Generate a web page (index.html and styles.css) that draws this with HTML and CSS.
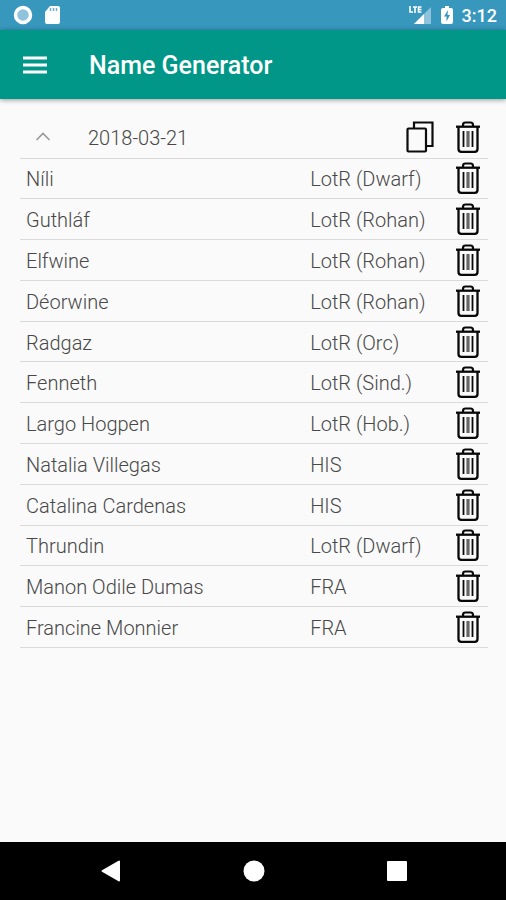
FILE: index.html
```html
<!DOCTYPE html>
<html lang="en">
<head>
<meta charset="utf-8">
<meta name="viewport" content="width=device-width, initial-scale=1">
<title>Name Generator</title>
<link rel="stylesheet" href="styles.css">
</head>
<body>
<svg class="sprite" aria-hidden="true">
  <symbol id="trash" viewBox="0 0 24 32">
    <g fill="none" stroke="#080808" stroke-width="2">
      <path d="M7 5V4q0-2.500 2.500-2.500h5q2.500 0 2.500 2.500v1" stroke-width="2.200"/>
      <path d="M0 5.700h24" stroke-width="2.300"/>
      <path d="M2.500 6v22q0 2.800 2.800 2.800h13.400q2.800 0 2.800-2.800V6" stroke-width="2.300"/>
      <path d="M7.500 10v16M16.500 10v16" stroke-width="1.800"/>
      <path d="M12 10v16" stroke="#666" stroke-width="3.200"/>
    </g>
  </symbol>
</svg>

<header class="status">
  <div class="status-group">
    <svg width="20" height="20" viewBox="0 0 20 20"><circle cx="10" cy="10" r="7.500" fill="#8fc3dc" stroke="#fff" stroke-width="3.500"/></svg>
    <svg width="16" height="20" viewBox="0 0 16 20"><path d="M6 1h8q2 0 2 2v14q0 2-2 2H3q-2 0-2-2V7z" fill="#fff"/><path d="M6.500 3v3M9.500 3v3M12.500 3v3" stroke="#6faecb" stroke-width="1.500"/></svg>
  </div>
  <div class="status-group status-right">
    <svg width="23" height="20" viewBox="0 0 23 20"><path d="M22 2v17H5z" fill="#8fc3dc"/><path d="M15 9v10H5z" fill="#fff"/><path d="M1 1v6h3M4 2h4M6 2v6M12.500 2H9.500v5h3M9.500 4.500h3" fill="none" stroke="#fff" stroke-width="1.600"/></svg>
    <svg class="battery" width="12" height="20" viewBox="0 0 12 20"><path d="M4 1h4v2h2q2 0 2 2v12q0 2-2 2H2q-2 0-2-2V5q0-2 2-2h2z" fill="#fff"/><path d="M7 5L3 11.500h2.500V16.500L9 10H6.500z" fill="#3797bc"/></svg>
    <time>3:12</time>
  </div>
</header>

<nav class="appbar">
  <button class="icon-btn" type="button" aria-label="Menu"><svg width="24" height="18" viewBox="0 0 24 18"><path d="M0 2h24M0 9h24M0 16h24" stroke="#fff" stroke-width="3"/></svg></button>
  <h1>Name Generator</h1>
</nav>

<main>
  <table>
    <thead>
      <tr>
        <th><div class="group"><button class="icon-btn" type="button" aria-label="Collapse"><svg width="16" height="10" viewBox="0 0 16 10"><path d="M1.500 8L8 1.500 14.500 8" fill="none" stroke="#999" stroke-width="1.600"/></svg></button><span>2018-03-21</span></div></th>
        <td colspan="2"><div class="actions"><button class="icon-btn" type="button" aria-label="Copy list"><svg width="28" height="32" viewBox="0 0 28 32"><path d="M8 7V1.500h18.500V25H21" fill="none" stroke="#0c0c0c" stroke-width="2.200"/><rect x="1.500" y="7.500" width="18.500" height="23" rx="1" fill="none" stroke="#0c0c0c" stroke-width="2.200"/></svg></button><button class="icon-btn" type="button" aria-label="Delete list"><svg width="24" height="32"><use href="#trash"/></svg></button></div></td>
      </tr>
    </thead>
    <tbody>
      <tr><td>Níli</td><td>LotR (Dwarf)</td><td><button class="icon-btn" type="button" aria-label="Delete Níli"><svg width="24" height="32"><use href="#trash"/></svg></button></td></tr>
      <tr><td>Guthláf</td><td>LotR (Rohan)</td><td><button class="icon-btn" type="button" aria-label="Delete Guthláf"><svg width="24" height="32"><use href="#trash"/></svg></button></td></tr>
      <tr><td>Elfwine</td><td>LotR (Rohan)</td><td><button class="icon-btn" type="button" aria-label="Delete Elfwine"><svg width="24" height="32"><use href="#trash"/></svg></button></td></tr>
      <tr><td>Déorwine</td><td>LotR (Rohan)</td><td><button class="icon-btn" type="button" aria-label="Delete Déorwine"><svg width="24" height="32"><use href="#trash"/></svg></button></td></tr>
      <tr><td>Radgaz</td><td>LotR (Orc)</td><td><button class="icon-btn" type="button" aria-label="Delete Radgaz"><svg width="24" height="32"><use href="#trash"/></svg></button></td></tr>
      <tr><td>Fenneth</td><td>LotR (Sind.)</td><td><button class="icon-btn" type="button" aria-label="Delete Fenneth"><svg width="24" height="32"><use href="#trash"/></svg></button></td></tr>
      <tr><td>Largo Hogpen</td><td>LotR (Hob.)</td><td><button class="icon-btn" type="button" aria-label="Delete Largo Hogpen"><svg width="24" height="32"><use href="#trash"/></svg></button></td></tr>
      <tr><td>Natalia Villegas</td><td>HIS</td><td><button class="icon-btn" type="button" aria-label="Delete Natalia Villegas"><svg width="24" height="32"><use href="#trash"/></svg></button></td></tr>
      <tr><td>Catalina Cardenas</td><td>HIS</td><td><button class="icon-btn" type="button" aria-label="Delete Catalina Cardenas"><svg width="24" height="32"><use href="#trash"/></svg></button></td></tr>
      <tr><td>Thrundin</td><td>LotR (Dwarf)</td><td><button class="icon-btn" type="button" aria-label="Delete Thrundin"><svg width="24" height="32"><use href="#trash"/></svg></button></td></tr>
      <tr><td>Manon Odile Dumas</td><td>FRA</td><td><button class="icon-btn" type="button" aria-label="Delete Manon Odile Dumas"><svg width="24" height="32"><use href="#trash"/></svg></button></td></tr>
      <tr><td>Francine Monnier</td><td>FRA</td><td><button class="icon-btn" type="button" aria-label="Delete Francine Monnier"><svg width="24" height="32"><use href="#trash"/></svg></button></td></tr>
    </tbody>
  </table>
</main>

<footer class="navbar">
  <button class="icon-btn" type="button" aria-label="Back"><svg width="22" height="22" viewBox="0 0 22 22"><path d="M19 1.500v19L2.500 11z" fill="#fff" stroke="#fff" stroke-width="2" stroke-linejoin="round"/></svg></button>
  <button class="icon-btn" type="button" aria-label="Home"><svg width="22" height="22" viewBox="0 0 22 22"><circle cx="11" cy="11" r="10.500" fill="#fff"/></svg></button>
  <button class="icon-btn" type="button" aria-label="Recent apps"><svg width="22" height="22" viewBox="0 0 22 22"><rect x="1" y="1" width="20" height="20" rx="1" fill="#fff"/></svg></button>
</footer>
</body>
</html>
```

FILE: styles.css
```css
* { box-sizing: border-box; }

body {
  margin: 0;
  min-height: 100vh;
  display: flex;
  flex-direction: column;
  background: #fafafa;
  color: #484848;
  font: 300 20px/24px Roboto, sans-serif;
}

.sprite { display: none; }
svg { display: block; }

.icon-btn {
  display: block;
  padding: 0;
  border: 0;
  background: none;
  cursor: pointer;
}

.status {
  display: flex;
  justify-content: space-between;
  align-items: center;
  height: 30px;
  padding: 0 9px 0 13px;
  background: #3797bc;
  color: #fff;
}

.status-group { display: flex; align-items: center; gap: 11px; }
.status-right { gap: 9px; }
.status time { padding-top: 2px; font-size: 18px; line-height: 24px; font-weight: 500; }

.appbar {
  display: flex;
  align-items: center;
  gap: 42px;
  height: 69px;
  padding: 0 23px;
  background: #009788;
  color: #fff;
  box-shadow: 0 1px 5px rgba(0, 0, 0, 0.4);
}

.appbar h1 { margin: 0; padding-top: 2px; font-size: 25px; line-height: 32px; font-weight: 500; }

main { flex: 1; padding: 18px 18px 18px 20px; }

/* Rows share the list height evenly, and grow with their content. */
table { width: 100%; height: 59vh; border-collapse: collapse; }

th, td {
  padding: 0;
  border-bottom: 1px solid #dadada;
  text-align: left;
  font-weight: 300;
}

th { width: 62%; height: 41px; }
tbody td { padding-top: 2px; }
tbody td:first-child { padding-left: 6px; }
tbody td:last-child { padding: 0 8px 0 0; }
tbody .icon-btn { margin-left: auto; }

.group { display: flex; align-items: center; gap: 37px; padding-left: 15px; }
.group span { padding-top: 2px; }
.actions { display: flex; justify-content: flex-end; gap: 22px; padding-right: 8px; }

.navbar {
  display: flex;
  justify-content: center;
  align-items: center;
  gap: 121px;
  height: 58px;
  padding-left: 1px;
  background: #000;
}
```
